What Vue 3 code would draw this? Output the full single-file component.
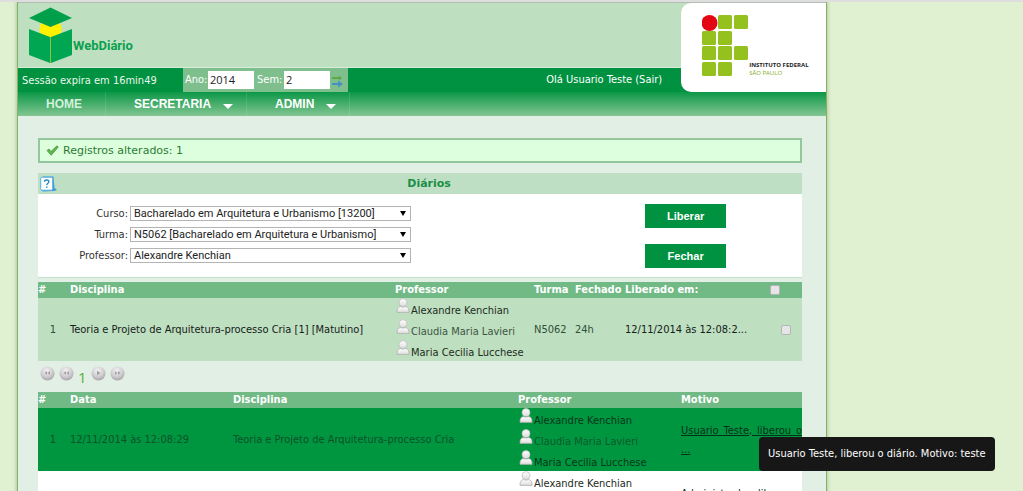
<script setup>
import { ref } from 'vue'

const ano = ref('2014')
const sem = ref('2')
const professores = ['Alexandre Kenchian', 'Claudia Maria Lavieri', 'Maria Cecilia Lucchese']
const campos = [
  { id: 'curso', label: 'Curso:', value: 'Bacharelado em Arquitetura e Urbanismo [13200]' },
  { id: 'turma', label: 'Turma:', value: 'N5062 [Bacharelado em Arquitetura e Urbanismo]' },
  { id: 'professor', label: 'Professor:', value: 'Alexandre Kenchian' },
]
const quadrados = [
  [16, 0], [32, 0],
  [0, 16], [16, 16],
  [0, 31], [16, 31], [32, 31],
  [0, 47], [16, 47],
]
</script>

<template>
  <div class="page">
    <svg width="0" height="0" class="defs" aria-hidden="true">
      <defs>
        <linearGradient id="pessoa" x1="0" y1="0" x2="0" y2="1">
          <stop offset="0" stop-color="#ffffff" />
          <stop offset="1" stop-color="#dcdcdc" />
        </linearGradient>
        <radialGradient id="bola" cx="0.45" cy="0.3" r="0.7">
          <stop offset="0" stop-color="#f4f2f4" />
          <stop offset="0.6" stop-color="#d0cdd0" />
          <stop offset="1" stop-color="#a9a6a9" />
        </radialGradient>
        <symbol id="user" viewBox="0 0 14 15">
          <path d="M1 14.4 Q0.6 9.3 4.2 8.6 Q7 9.6 9.8 8.6 Q13.4 9.3 13 14.4 Z" fill="url(#pessoa)" stroke="#a9a9a9" stroke-width="0.7" />
          <circle cx="7" cy="4.6" r="4" fill="url(#pessoa)" stroke="#b8b8b8" stroke-width="0.7" />
        </symbol>
      </defs>
    </svg>

    <div class="shell">
      <header>
        <div class="banner">
          <svg class="cube" viewBox="0 0 45 57" width="45" height="57">
            <circle cx="22.500" cy="22" r="11" fill="#fff200" />
            <path d="M1 11 22.500 0.500 44 11 22.500 20Z" fill="#00a04a" />
            <path d="M1 22 22 30 V56 L1 48Z" fill="#00a651" />
            <path d="M44 22 23 30 V56 L44 48Z" fill="#00a651" />
            <path d="M22.500 30V56" stroke="#8ec63f" />
          </svg>
          <span class="wordmark">WebDiário</span>
        </div>
        <div class="bar">
          <span class="session">Sessão expira em 16min49</span>
          <form class="period" @submit.prevent>
            <label for="ano">Ano:</label><input id="ano" v-model="ano" type="text" />
            <label for="sem" class="sem">Sem:</label><input id="sem" v-model="sem" type="text" />
            <button class="swap" aria-label="Alterar">
              <svg viewBox="0 0 12 14" width="12" height="14">
                <path d="M1 3H8V1.500L11 4 8 6.500V5H1Z" fill="#5fa845" />
                <path d="M1 9H7V6.500L12 10 7 13.500V11H1Z" fill="#4a8fc4" />
              </svg>
            </button>
          </form>
          <a class="user" href="#">Olá Usuario Teste (Sair)</a>
        </div>
        <nav>
          <a href="#" class="home">HOME</a>
          <a href="#" class="secretaria">SECRETARIA <i></i></a>
          <a href="#" class="admin">ADMIN <i></i></a>
        </nav>
        <div class="institute">
          <svg viewBox="0 0 46 62" width="46" height="62">
            <rect v-for="(q, i) in quadrados" :key="i" :x="q[0]" :y="q[1]" width="14" height="14" rx="1.500" fill="#95c11f" />
            <circle cx="7.500" cy="8" r="8" fill="#e30613" />
          </svg>
          <p><strong>INSTITUTO FEDERAL</strong><span>SÃO PAULO</span></p>
        </div>
      </header>

      <main>
        <div class="alert">
          <svg viewBox="0 0 13 11" width="13" height="11">
            <path d="M1 5.500 3 4 5 6.500 11 0.800 12.300 2 5.200 10.300Z" fill="#5cb947" stroke="#3d8f35" stroke-width="0.7" />
          </svg>
          Registros alterados: 1
        </div>

        <section class="panel">
          <div class="title">
            <svg viewBox="0 0 17 16" width="17" height="16">
              <path d="M3 0.500H13.500L14.500 12 17 14 14 15 3 15.500 1 14Z" fill="#3c9ad8" />
              <rect x="0.700" y="1.200" width="12" height="13" rx="1.500" fill="#fff" stroke="#54b0e4" />
              <path d="M4.500 5.800Q4.600 4 6.700 4T8.900 5.800Q8.900 6.900 7.600 7.500 6.800 8 6.800 9.200M6.800 10.500V12" fill="none" stroke="#2585c8" stroke-width="1.300" />
            </svg>
            <h2>Diários</h2>
          </div>
          <form class="filter" @submit.prevent>
            <div class="fields">
              <template v-for="c in campos" :key="c.id">
                <label :for="c.id">{{ c.label }}</label>
                <div class="select">
                  <select :id="c.id"><option>{{ c.value }}</option></select>
                  <i></i>
                </div>
              </template>
            </div>
            <div class="actions">
              <button>Liberar</button>
              <button>Fechar</button>
            </div>
          </form>
        </section>

        <table class="diaries">
          <colgroup><col class="n" /><col class="d" /><col class="p" /><col class="t" /><col class="f" /><col class="l" /><col /></colgroup>
          <thead>
            <tr>
              <th>#</th><th>Disciplina</th><th>Professor</th><th>Turma</th><th>Fechado</th><th>Liberado em:</th>
              <th class="all"><input type="checkbox" aria-label="Selecionar todos" /></th>
            </tr>
          </thead>
          <tbody>
            <tr>
              <td class="num">1</td>
              <td class="dark">Teoria e Projeto de Arquitetura-processo Cria [1] [Matutino]</td>
              <td>
                <ul>
                  <li v-for="p in professores" :key="p"><svg width="14" height="15"><use href="#user" /></svg><span>{{ p }}</span></li>
                </ul>
              </td>
              <td>N5062</td>
              <td>24h</td>
              <td class="dark">12/11/2014 às 12:08:2...</td>
              <td class="one"><input type="checkbox" aria-label="Selecionar diário 1" /></td>
            </tr>
          </tbody>
        </table>

        <div class="pager">
          <button aria-label="Primeira"><svg viewBox="0 0 15 15" width="15" height="15"><circle cx="7.500" cy="7.500" r="7" fill="url(#bola)" /><path d="M7 5V9L4.500 7ZM10 5V9L7.500 7Z" fill="#a5a2a8" /></svg></button>
          <button aria-label="Anterior"><svg viewBox="0 0 15 15" width="15" height="15"><circle cx="7.500" cy="7.500" r="7" fill="url(#bola)" /><path d="M7 5V9L4.500 7ZM10 5V9L7.500 7Z" fill="#a5a2a8" /></svg></button>
          <span>1</span>
          <button aria-label="Próxima"><svg viewBox="0 0 15 15" width="15" height="15"><circle cx="7.500" cy="7.500" r="7" fill="url(#bola)" /><path d="M6 4.500V9.500L9.500 7Z" fill="#a5a2a8" /></svg></button>
          <button aria-label="Última"><svg viewBox="0 0 15 15" width="15" height="15"><circle cx="7.500" cy="7.500" r="7" fill="url(#bola)" /><path d="M5 5V9L7.500 7ZM8 5V9L10.500 7Z" fill="#a5a2a8" /></svg></button>
        </div>

        <table class="history">
          <colgroup><col class="n" /><col class="w" /><col class="c" /><col class="w" /><col /></colgroup>
          <thead>
            <tr><th>#</th><th>Data</th><th>Disciplina</th><th>Professor</th><th>Motivo</th></tr>
          </thead>
          <tbody>
            <tr class="active">
              <td class="num">1</td>
              <td>12/11/2014 às 12:08:29</td>
              <td>Teoria e Projeto de Arquitetura-processo Cria</td>
              <td>
                <ul>
                  <li v-for="p in professores" :key="p"><svg width="14" height="15"><use href="#user" /></svg><span>{{ p }}</span></li>
                </ul>
              </td>
              <td class="reason"><a href="#"><span>Usuario Teste, liberou o</span>...</a></td>
            </tr>
            <tr class="plain">
              <td></td>
              <td></td>
              <td></td>
              <td class="top">
                <ul>
                  <li><svg width="14" height="15"><use href="#user" /></svg><span>Alexandre Kenchian</span></li>
                </ul>
              </td>
              <td class="reason"><a href="#"><span>Administrador, liberou o</span>...</a></td>
            </tr>
          </tbody>
        </table>
      </main>
    </div>
    <div class="tooltip" role="tooltip">Usuario Teste, liberou o diário. Motivo: teste</div>
  </div>
</template>

<style>
body { margin: 0; background: #dff1d0; }
</style>

<style scoped>
* { box-sizing: border-box; }
.page {
  position: relative;
  height: 100vh;
  overflow: hidden;
  border-top: 2px solid #dedede;
  font: 11px/16px "DejaVu Sans Condensed", "DejaVu Sans", Verdana, sans-serif;
  font-stretch: condensed;
  color: #2f4f38;
}
.defs { position: absolute; }
.shell {
  width: 79%;
  min-height: 100%;
  margin-left: 18px;
  border-top: 1px solid #b3bdb3;
  background: #e1efe5;
  box-shadow: 0 0 0 1px #86b06a, 0 0 4px 1px #9ab884;
}
header { position: relative; }
.banner {
  display: flex;
  height: 65px;
  padding: 4px 10px;
  background: #bfdfc1;
  border-bottom: 1px solid #d6ecd8;
}
.wordmark {
  align-self: center;
  padding-top: 22px;
  font: bold 13px/20px Roboto, "Liberation Sans", sans-serif;
  color: #0aa14e;
}
.bar { display: flex; height: 24px; background: #009240; color: #e9f7ec; }
.session { width: 165px; padding-left: 4px; line-height: 26px; }
.period { display: flex; align-items: center; width: 165px; padding: 0 2px; background: #7ebf8d; }
.period label { width: 23px; color: #fff; }
.period label.sem { width: 30px; padding-left: 3px; }
.period input {
  width: 46px;
  height: 18px;
  padding: 0 2px;
  border: 0;
  background: #fff;
  font: 11px/18px "Open Sans", sans-serif;
  color: #222;
}
.swap { padding: 2px 0 0 1px; border: 0; background: none; }
.swap svg { display: block; }
.user { margin-left: auto; padding-right: 164px; line-height: 24px; color: #fff; text-decoration: none; }
nav { display: flex; height: 24px; background: linear-gradient(#0b9747, #83c692); }
nav a {
  display: flex;
  align-items: center;
  border-right: 1px solid #ffffff1c;
  padding-left: 28px;
  font: bold 12px/26px "Liberation Sans", Arial, sans-serif;
  color: #fff;
  text-decoration: none;
}
nav .home { width: 88px; color: #d5f0dc; }
nav .secretaria { width: 141px; }
nav .admin { width: 103px; }
nav i {
  margin: 4px 13px 0 auto;
  border: 5px solid transparent;
  border-top-color: #fff;
  border-bottom: 0;
}
.institute {
  position: absolute;
  top: 0;
  right: 0;
  display: flex;
  gap: 1px;
  width: 145px;
  height: 89px;
  padding: 12px 0 0 21px;
  border-radius: 10px 0 0 10px;
  background: #fff;
}
.institute svg { flex: none; }
.institute p {
  margin: 46px 0 0;
  font: 6px/8px "Open Sans", sans-serif;
  white-space: nowrap;
  color: #7fae1b;
}
.institute strong { display: block; font-weight: 700; color: #222; }

main { padding: 22px 24px 0 20px; }
.alert {
  display: flex;
  align-items: center;
  gap: 4px;
  height: 25px;
  padding-left: 6px;
  border: 2px solid #94c79c;
  background: #ddffdd;
  font-family: "DejaVu Sans", Verdana, sans-serif;
  font-stretch: normal;
  color: #2d7a36;
}
.panel { margin-top: 10px; background: #fff; border-bottom: 1px solid #c3e0c8; }
.title { display: grid; align-items: center; height: 21px; background: #bfdfc5; }
.title svg, .title h2 { grid-area: 1 / 1; }
.title svg { margin-left: 2px; }
.title h2 {
  margin: 0;
  padding-left: 18px;
  text-align: center;
  font: bold 11px/21px "DejaVu Sans", Verdana, sans-serif;
  color: #1b8f45;
}
.filter { display: flex; justify-content: space-between; padding: 10px 76px 9px 0; }
.fields {
  display: grid;
  grid-template-columns: 90px 281px;
  grid-auto-rows: 15px;
  gap: 6px 2px;
  align-content: start;
  padding-top: 2px;
  line-height: 15px;
}
.fields label { text-align: right; color: #333; }
.select { display: grid; align-items: center; }
.select select, .select i { grid-area: 1 / 1; }
.select select {
  appearance: none;
  width: 100%;
  height: 15px;
  padding: 0 3px;
  border: 1px solid #b4b4b4;
  border-radius: 0;
  background: #fff;
  font: 11px/13px Roboto, "Liberation Sans", sans-serif;
  color: #222;
}
.select i {
  justify-self: end;
  margin-right: 5px;
  border: 3px solid transparent;
  border-top: 5px solid #000;
  border-bottom: 0;
  pointer-events: none;
}
.actions { display: grid; gap: 16px; }
.actions button {
  width: 81px;
  height: 24px;
  padding: 0;
  border: 0;
  background: #009240;
  font: bold 11px/24px "Liberation Sans", Arial, sans-serif;
  color: #fff;
}

table { width: 100%; border-collapse: collapse; table-layout: fixed; }
th, td { padding: 0; text-align: left; white-space: nowrap; }
th { height: 16px; line-height: 16px; background: #71ba85; color: #fff; }
td { height: 63px; background: #bfdfc1; }
.diaries { margin-top: 4px; }
.n { width: 32px; }
.d { width: 325px; }
.p { width: 139px; }
.t { width: 41px; }
.f { width: 50px; }
.l { width: 145px; }
.w { width: 163px; }
.c { width: 285px; }
.num { padding-right: 14px; text-align: right; }
.dark { color: #142018; }
ul { margin: 0; padding: 0; list-style: none; }
li { display: flex; gap: 1px; height: 21px; padding-left: 1px; }
li span { align-self: flex-end; line-height: 17px; color: #1d2b20; }
li:nth-child(2) span { color: #3c5643; }
input[type="checkbox"] {
  appearance: none;
  display: block;
  width: 10px;
  height: 10px;
  margin: 0;
  border: 1px solid #b5b5b5;
  border-radius: 2px;
  background: #e6e6e6;
}
.one input { margin-left: 11px; }
.pager { display: flex; align-items: flex-start; gap: 4px; height: 31px; padding: 5px 2px; }
.pager button { padding: 0; border: 0; background: none; }
.pager svg { display: block; }
.pager span { font: 15px/22px "Open Sans", sans-serif; color: #5eae3a; }
.active td { background: #009640; color: #0c5128; }
.active li span { color: #04361a; }
.active li:nth-child(2) span { color: #0c5a2b; }
.plain td { background: #fff; }
.plain .top { vertical-align: top; }
.reason a { display: block; line-height: 19px; color: #04301a; }
.reason span { display: block; overflow: hidden; text-align-last: justify; text-decoration: underline; }
.tooltip {
  position: absolute;
  top: 435px;
  left: 759px;
  padding: 9px;
  border-radius: 4px;
  background: #171717;
  color: #fff;
  white-space: nowrap;
}
</style>
